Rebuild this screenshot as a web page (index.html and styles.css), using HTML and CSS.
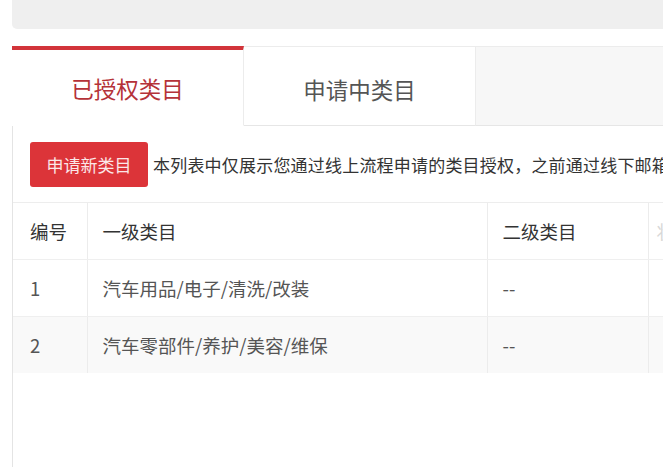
FILE: index.html
```html
<!DOCTYPE html>
<html lang="zh-CN">
<head>
<meta charset="utf-8">
<title>类目授权</title>
<link rel="stylesheet" href="styles.css">
</head>
<body>
<div class="page">
  <div class="topbar"></div>
  <div class="tabs">
    <div class="tab active">已授权类目</div>
    <div class="tab">申请中类目</div>
    <div class="tab-rest"></div>
  </div>
  <div class="panel">
    <div class="toolbar">
      <button class="btn-apply" type="button">申请新类目</button>
      <span class="desc">本列表中仅展示您通过线上流程申请的类目授权，之前通过线下邮箱申请的类目授权请联系小二查询</span>
    </div>
    <table class="cat-table">
      <colgroup>
        <col class="c-no">
        <col class="c-first">
        <col class="c-second">
        <col class="c-status">
      </colgroup>
      <thead>
        <tr>
          <th>编号</th>
          <th>一级类目</th>
          <th>二级类目</th>
          <th class="faint">状态</th>
        </tr>
      </thead>
      <tbody>
        <tr>
          <td>1</td>
          <td>汽车用品/电子/清洗/改装</td>
          <td>--</td>
          <td></td>
        </tr>
        <tr class="alt">
          <td>2</td>
          <td>汽车零部件/养护/美容/维保</td>
          <td>--</td>
          <td></td>
        </tr>
      </tbody>
    </table>
  </div>
</div>
</body>
</html>
```

FILE: styles.css
```css
html, body {
  margin: 0;
  padding: 0;
  background: #ffffff;
  overflow: hidden;
  height: 467px;
}

body {
  font-family: "Noto Sans CJK SC", "Noto Sans", sans-serif;
  color: #333333;
}

.page {
  width: 900px;
  height: 467px;
  padding-left: 12px;
  display: flex;
  flex-direction: column;
}

.topbar {
  height: 29px;
  background: #efefef;
  border-radius: 0 0 0 5px;
  margin-bottom: 17px;
  flex: none;
}

.tabs {
  display: flex;
  height: 80px;
  flex: none;
  background: #f7f7f7;
  border-top: 1px solid #ececec;
  box-sizing: border-box;
}

.tab {
  width: 232px;
  box-sizing: border-box;
  display: flex;
  align-items: center;
  justify-content: center;
  padding-top: 5px;
  background: #ffffff;
  border-right: 1px solid #ececec;
  border-bottom: 1px solid #e6e6e6;
  font-size: 22.5px;
  color: #555555;
}

.tab.active {
  border-top: 4px solid #d2343a;
  margin-top: -1px;
  border-bottom-color: #ffffff;
  color: #b53238;
  padding-top: 1px;
}

.tab-rest {
  flex: 1;
  border-bottom: 1px solid #e6e6e6;
}

.panel {
  flex: 1;
  border-left: 1px solid #e4e4e4;
  background: #ffffff;
}

.toolbar {
  display: flex;
  align-items: center;
  gap: 5px;
  padding: 16px 0 15px 17px;
  border-bottom: 1px solid #ededed;
  white-space: nowrap;
}

.btn-apply {
  flex: none;
  width: 118px;
  height: 45px;
  border: none;
  border-radius: 3px;
  background: #dc3439;
  color: #fbe7e8;
  font-family: "Noto Sans CJK SC", sans-serif;
  font-size: 17px;
  padding: 0;
}

.desc {
  font-size: 17px;
  color: #333333;
  letter-spacing: 0.2px;
}

.cat-table {
  border-collapse: collapse;
  table-layout: fixed;
  width: 835px;
  font-size: 18.5px;
}

.c-no { width: 74px; }
.c-first { width: 400px; }
.c-second { width: 161px; }
.c-status { width: 200px; }

.cat-table th,
.cat-table td {
  text-align: left;
  padding: 0 0 0 15px;
  border-right: 1px solid #ececec;
  border-bottom: 1px solid #efefef;
  white-space: nowrap;
}

.cat-table th:first-child,
.cat-table td:first-child {
  padding-left: 17px;
}

.cat-table th {
  height: 56px;
  font-weight: normal;
  color: #333333;
}

.cat-table th.faint {
  color: #d8d8d8;
  padding-left: 8px;
}

.cat-table td {
  height: 56px;
  color: #555555;
}

.cat-table tr.alt td {
  background: #f9f9f9;
  border-bottom: none;
}
```
